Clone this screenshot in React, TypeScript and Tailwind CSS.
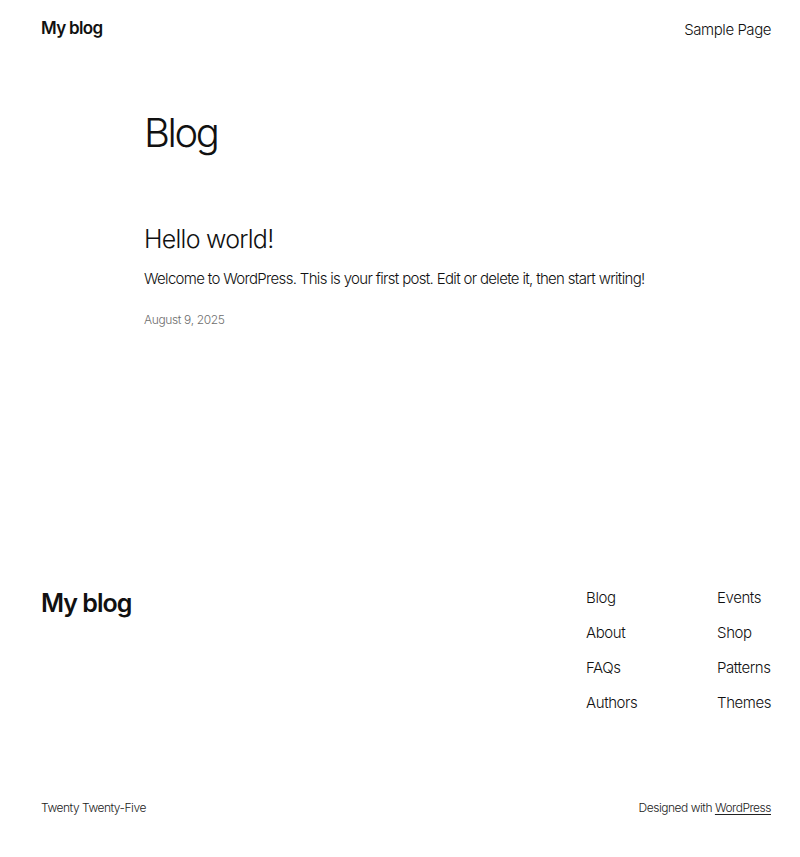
export default function App() {
  const col1 = ['Blog', 'About', 'FAQs', 'Authors'];
  const col2 = ['Events', 'Shop', 'Patterns', 'Themes'];
  return (
    <div
      className="min-h-[857px] bg-white text-[#111111] flex flex-col"
      style={{ fontFamily: 'Inter, "Noto Sans", sans-serif' }}
    >
      <header className="flex items-center justify-between pl-[41px] pr-[29px] h-[56px] pt-[2px]">
        <a className="text-[17px] font-semibold tracking-[-0.04em]">My blog</a>
        <nav>
          <a className="text-[15px] font-light tracking-[-0.03em]">Sample Page</a>
        </nav>
      </header>

      <main className="w-[512px] mx-auto">
        <h1 className="text-[40px] font-light tracking-[-0.06em] leading-none mt-[57px]">Blog</h1>
        <article className="mt-[74px]">
          <h2 className="text-[25px] font-light tracking-[-0.03em] leading-none">Hello world!</h2>
          <p className="mt-[16px] text-[15px] font-light tracking-[-0.045em] leading-normal whitespace-nowrap">
            Welcome to WordPress. This is your first post. Edit or delete it, then start writing!
          </p>
          <div className="mt-[20px] text-[12px] text-[#6e6e6e] font-light tracking-[-0.03em]">
            August 9, 2025
          </div>
        </article>
      </main>

      <footer className="mt-auto pl-[41px] pr-[29px]">
        <div className="flex justify-between">
          <div className="text-[25px] font-semibold tracking-[-0.04em] leading-none pt-[4px]">My blog</div>
          <div className="flex gap-[42px]">
            <ul className="w-[89px] flex flex-col gap-[14px]">
              {col1.map(t => (
                <li key={t} className="text-[15px] font-light tracking-[-0.03em] leading-[21px]">{t}</li>
              ))}
            </ul>
            <ul className="flex flex-col gap-[14px]">
              {col2.map(t => (
                <li key={t} className="text-[15px] font-light tracking-[-0.03em] leading-[21px]">{t}</li>
              ))}
            </ul>
          </div>
        </div>
        <div className="flex justify-between items-center mt-[86px] pb-[40px] text-[12px] font-light tracking-[-0.04em] text-[#222]">
          <span>Twenty Twenty-Five</span>
          <span>
            Designed with <a className="underline underline-offset-2">WordPress</a>
          </span>
        </div>
      </footer>
    </div>
  );
}
